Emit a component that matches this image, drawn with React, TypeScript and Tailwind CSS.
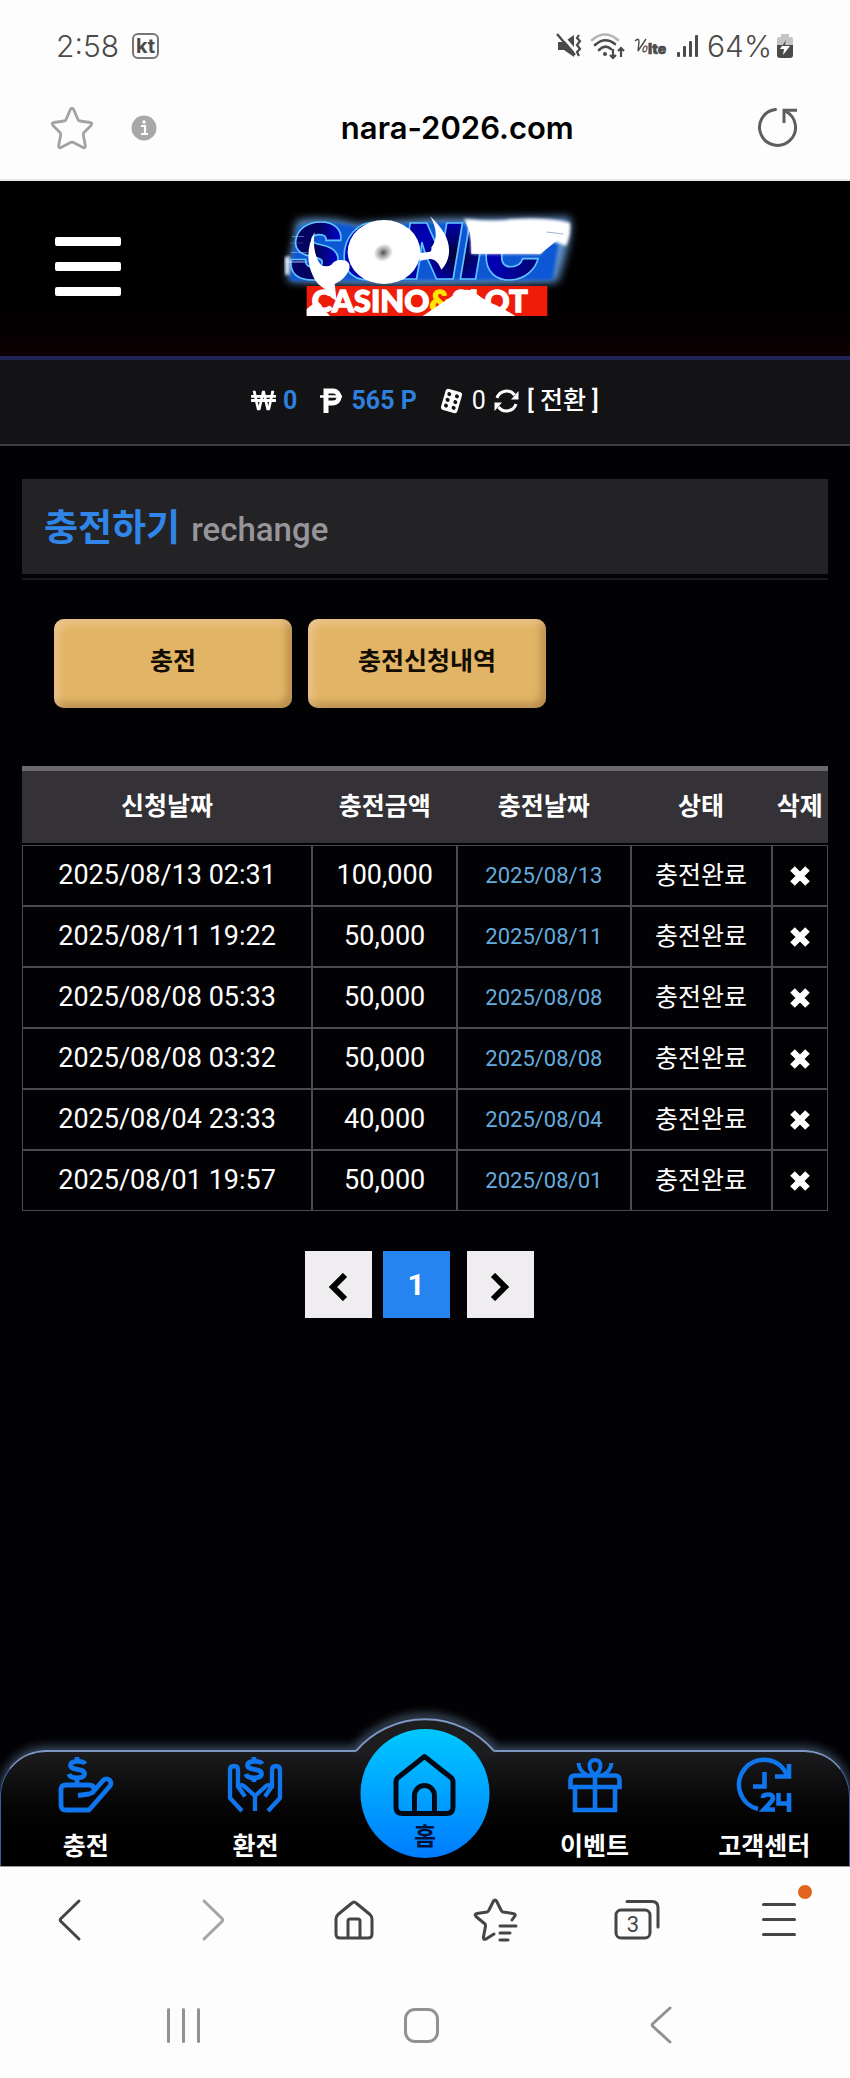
import type { ReactNode } from "react";
import { FaWonSign } from "react-icons/fa";

const rows = [
  { requested: "2025/08/13 02:31", amount: "100,000", charged: "2025/08/13" },
  { requested: "2025/08/11 19:22", amount: "50,000", charged: "2025/08/11" },
  { requested: "2025/08/08 05:33", amount: "50,000", charged: "2025/08/08" },
  { requested: "2025/08/08 03:32", amount: "50,000", charged: "2025/08/08" },
  { requested: "2025/08/04 23:33", amount: "40,000", charged: "2025/08/04" },
  { requested: "2025/08/01 19:57", amount: "50,000", charged: "2025/08/01" },
];

function StatusBar() {
  return (
    <div className="flex h-[92px] items-center justify-between px-[56px] font-[Inter,sans-serif] text-[30px] font-light text-[#4a4a4a]">
      <div className="flex items-center gap-[13px]">
        <span>2:58</span>
        <span className="flex h-[26px] w-[27px] items-center justify-center rounded-[6px] border-2 border-[#777] text-[20px] leading-none font-bold">kt</span>
      </div>
      <div className="flex items-center gap-[8px]">
        <svg className="h-[26px] w-[26px]" viewBox="0 0 26 26" fill="none">
          <path d="M2 9h6l10-7v22l-10-7H2z" fill="#4a4a4a" />
          <path d="M3 -1l19 22" stroke="#fdfdfd" strokeWidth="3" />
          <path d="M1 1l18 21" stroke="#4a4a4a" strokeWidth="2.4" />
          <path d="M23 2l-2 3 3 3-3 4 3 4-3 3 2 4" stroke="#4a4a4a" strokeWidth="2.2" />
        </svg>
        <svg className="h-[28px] w-[36px]" viewBox="0 0 36 28" fill="none" strokeWidth="2.6" strokeLinecap="round">
          <path d="M2 8Q15-3 28 8" stroke="#b5b5b5" />
          <path d="M5 13Q15 4 25 12M9 18Q15 12 21 17" stroke="#4a4a4a" />
          <circle cx="15" cy="22" r="2" fill="#4a4a4a" />
          <path d="M23 17v9m-3-3l3 3 3-3M31 25v-9m-3 3l3-3 3 3" stroke="#4a4a4a" strokeWidth="2.2" strokeLinecap="butt" />
        </svg>
        <svg className="h-[26px] w-[34px]" viewBox="0 0 34 26" fill="none" stroke="#4a4a4a">
          <path d="M1 8Q5 4 5 9L4 18Q8 12 12 6" strokeWidth="1.4" />
          <ellipse cx="11" cy="16" rx="1.800" ry="3" strokeWidth="1.2" transform="rotate(20 11 16)" />
          <text x="14" y="21" fontSize="14" fontWeight="900" fontFamily="Inter" fill="#4a4a4a" strokeWidth="0.500">lte</text>
        </svg>
        <svg className="h-[24px] w-[23px]" viewBox="0 0 23 24" fill="#4a4a4a">
          <rect x="1" y="18" width="3" height="5" rx="1" />
          <rect x="7" y="12" width="3" height="11" rx="1" />
          <rect x="13" y="7" width="3" height="16" rx="1" />
          <rect x="19" y="1" width="3" height="22" rx="1" />
        </svg>
        <span>64%</span>
        <svg className="-ml-1 h-[26px] w-[18px]" viewBox="0 0 18 26">
          <path d="M5 1h8v3h2q2 0 2 2v8H1V6q0-2 2-2h2z" fill="#c4c4c4" />
          <path d="M1 12h16v10q0 3-3 3H4q-3 0-3-3z" fill="#4a4a4a" />
          <path d="M10 7l-6 9h4l-1 6 7-9h-5z" fill="#fff" />
          <path d="M10 7l-4 6h3z" fill="#4a4a4a" />
        </svg>
      </div>
    </div>
  );
}

function AddressBar() {
  return (
    <div className="grid h-[89px] grid-cols-[9fr_auto_7fr] items-center border-b-2 border-[#e6e6e6] px-[50px] pb-[16px]">
      <div className="flex items-center gap-[37px]">
        <button aria-label="즐겨찾기">
          <svg className="block h-[44px] w-[44px]" viewBox="0 0 44 44" fill="none" stroke="#a3a3a3" strokeWidth="2.8" strokeLinejoin="round">
            <path d="M20.400 3.500Q22 1 23.600 3.500L28 13.500Q28.500 14.800 30 15L40 16.500Q43 17 41 19.500L34 26.500Q33 27.500 33.300 29L35.300 39.500Q35.500 42.500 33 41.500L23.500 36.500Q22 35.700 20.500 36.500L11 41.500Q8.500 42.500 8.700 39.500L10.700 29Q11 27.500 10 26.500L3 19.500Q1 17 4 16.500L14 15Q15.500 14.800 16 13.500Z" />
          </svg>
        </button>
        <button aria-label="사이트 정보">
          <svg className="block h-[26px] w-[26px]" viewBox="0 0 26 26">
            <circle cx="13" cy="13" r="12.500" fill="#a8a8a8" />
            <path d="M10 11h4v8M10 19h7" stroke="#fff" strokeWidth="2.200" fill="none" />
            <circle cx="13" cy="7" r="1.700" fill="#fff" />
          </svg>
        </button>
      </div>
      <span className="font-[Inter,sans-serif] text-[31px] leading-none font-semibold text-black">nara-2026.com</span>
      <button aria-label="새로고침" className="justify-self-end">
        <svg className="block h-[44px] w-[44px]" viewBox="0 0 44 44" fill="none" stroke="#5e5e5e" strokeWidth="3">
          <path d="M19.500 3.500A18 18 0 1 0 30 5.500" strokeLinecap="round" />
          <path d="M28 17V4.300H41" />
        </svg>
      </button>
    </div>
  );
}

function Logo() {
  return (
    <svg className="block h-[110px] w-[300px] overflow-visible" viewBox="15 60 900 330" role="img" aria-label="SONIC CASINO&SLOT">
      <defs>
        <radialGradient id="letter" gradientUnits="userSpaceOnUse" cx="560" cy="190" r="420">
          <stop offset="0" stopColor="#010130" />
          <stop offset="0.250" stopColor="#0000b8" />
          <stop offset="0.550" stopColor="#02027a" />
          <stop offset="0.850" stopColor="#0202c8" />
          <stop offset="1" stopColor="#020260" />
        </radialGradient>
        <radialGradient id="hole">
          <stop offset="0" stopColor="#4a4a55" />
          <stop offset="0.350" stopColor="#999" />
          <stop offset="1" stopColor="#fff" />
        </radialGradient>
        <filter id="blurWide" x="-20%" y="-30%" width="140%" height="160%"><feGaussianBlur stdDeviation="12" /></filter>
        <filter id="blurSoft" x="-10%" y="-10%" width="120%" height="120%"><feGaussianBlur stdDeviation="5" /></filter>
        <filter id="blurFine" x="-10%" y="-10%" width="120%" height="120%"><feGaussianBlur stdDeviation="2" /></filter>
      </defs>
      <path d="M80 86Q160 70 260 96L480 80L900 76Q910 130 862 270Q400 290 56 268Q46 220 66 180Z" fill="#6fa6e6" filter="url(#blurWide)" opacity="0.900" />
      <path d="M85 105Q160 78 260 105L480 92L600 92L870 130L848 264L60 266L66 200Z" fill="#0757d4" filter="url(#blurSoft)" />
      <text x="58" y="262" fontFamily="Inter" fontWeight="900" fontStyle="italic" fontSize="232" stroke="#5ec4ff" strokeWidth="5" fill="url(#letter)">SONIC</text>
      <path d="M52 206h60v7H52zM62 180h50v3H62zM66 132h36v3H66zM60 152h40v2H60z" fill="#9cc9ff" opacity="0.500" />
      <path d="M44 196L60 192L58 248L46 248Z" fill="#dfeaff" filter="url(#blurSoft)" />
      <ellipse cx="342" cy="180" rx="109" ry="96" fill="#fff" filter="url(#blurFine)" />
      <ellipse cx="340" cy="182" rx="30" ry="26" fill="url(#hole)" transform="rotate(-30 340 182)" />
      <path d="M480 72C520 110 540 145 537 182C535 205 525 222 514 233C506 212 494 200 478 201L450 206L444 184L476 180Q486 180 484 166C504 140 500 105 480 72Z" fill="#fff" />
      <path d="M604 185Q606 120 582 80Q680 90 720 82Q820 74 900 92Q904 128 888 162L862 152Q842 146 828 158L812 186Z" fill="#fff" filter="url(#blurSoft)" />
      <path d="M604 185Q606 120 588 92L860 96L880 130L812 185Z" fill="#fff" filter="url(#blurFine)" />
      <path d="M830 120l50 6" stroke="#9fb4d4" strokeWidth="3" />
      <rect x="110" y="282" width="722" height="90" fill="#ee1c08" />
      <text x="125" y="361" fontFamily="Lato" fontWeight="900" fontSize="93" fill="#fff" stroke="#fff" strokeWidth="4">
        CASINO<tspan fill="#ffe500" stroke="#ffe500">&amp;</tspan>SLOT
      </text>
      <path d="M134 120C112 160 108 205 128 250C145 290 175 290 176 304Q172 312 200 326L194 276Q226 262 237 234Q244 210 222 205Q196 200 184 218Q170 228 152 218C134 195 128 155 134 120Z" fill="#fff" />
      <path d="M110 372V352Q130 332 144 330Q160 340 156 352Q172 362 180 372ZM458 372L550 310Q590 282 612 300Q650 330 676 338Q712 356 736 372Z" fill="#fff" />
    </svg>
  );
}

function SiteHeader() {
  return (
    <header className="grid h-[179px] grid-cols-[1fr_auto_1fr] items-center border-b-4 border-[#1f2656] bg-linear-to-b from-black from-50% to-[#0e0003] px-[55px] pb-[4px]">
      <button aria-label="메뉴" className="flex w-[66px] flex-col gap-[16px]">
        <span className="h-[9px] rounded-[2px] bg-white" />
        <span className="h-[9px] rounded-[2px] bg-white" />
        <span className="h-[9px] rounded-[2px] bg-white" />
      </button>
      <a href="#"><Logo /></a>
    </header>
  );
}

function BalanceBar() {
  return (
    <div className="flex h-[86px] items-center justify-center border-b-2 border-[#3e3c40] bg-[#131215] pb-[3px] text-[25px] leading-none text-white">
      <FaWonSign className="h-[23px] w-[25px]" />
      <span className="ml-[7px] font-bold text-[#2f80dc]">0</span>
      <svg className="ml-[23px] h-[26px] w-[22px]" viewBox="0 0 22 26" fill="none" stroke="#fff">
        <path d="M6 25V3h7a5.500 5.500 0 0 1 0 12H6" strokeWidth="5" />
        <path d="M0 8.500h22" strokeWidth="2.500" />
      </svg>
      <span className="ml-[9px] font-bold text-[#2f80dc]">565 P</span>
      <svg className="ml-[22px] h-[26px] w-[25px]" viewBox="0 0 25 26">
        <g transform="rotate(16 12.500 13)">
          <rect x="4" y="2" width="17" height="22" rx="3" fill="#fff" />
          <g fill="#131215">
            <circle cx="8.500" cy="7" r="2" /><circle cx="16.500" cy="7" r="2" />
            <circle cx="8.500" cy="13" r="2" /><circle cx="16.500" cy="13" r="2" />
            <circle cx="8.500" cy="19" r="2" /><circle cx="16.500" cy="19" r="2" />
          </g>
        </g>
      </svg>
      <span className="ml-[8px]">0</span>
      <svg className="ml-[8px] h-[26px] w-[25px]" viewBox="0 0 25 26" fill="none" stroke="#fff" strokeWidth="3">
        <path d="M3 10A10 10 0 0 1 20.500 7M22 16A10 10 0 0 1 4.500 19" />
        <path d="M24.500 3v8.500H17zM.5 23v-8.500H8z" fill="#fff" stroke="none" />
      </svg>
      <button className="ml-[8px] font-medium">[ 전환 ]</button>
    </div>
  );
}

function HistoryTable() {
  return (
    <table className="mt-[58px] w-full table-fixed border-separate border-spacing-0 text-center">
      <colgroup>
        <col className="w-[36%]" />
        <col className="w-[18%]" />
        <col className="w-[21.5%]" />
        <col className="w-[17.5%]" />
        <col className="w-[7%]" />
      </colgroup>
      <thead>
        <tr className="h-[79px] text-[25px] font-bold">
          {["신청날짜", "충전금액", "충전날짜", "상태", "삭제"].map((label) => (
            <th key={label} className="border-t-[5px] border-b-2 border-t-[#6b696c] border-b-black bg-[#343236] p-0 whitespace-nowrap">{label}</th>
          ))}
        </tr>
      </thead>
      <tbody>
        {rows.map((row) => (
          <tr key={row.requested} className="h-[61px] text-[27px] leading-none [&>td]:border [&>td]:border-[#4c4a4e] [&>td]:p-0">
            <td>{row.requested}</td>
            <td>{row.amount}</td>
            <td className="text-[22px] text-[#64acdf]">{row.charged}</td>
            <td className="text-[25px]">충전완료</td>
            <td>
              <button aria-label="삭제" className="block w-full">
                <svg className="mx-auto block h-[20px] w-[20px]" viewBox="0 0 20 20" stroke="#fff" strokeWidth="6.500">
                  <path d="M2.500 2.500l15 15M17.500 2.500l-15 15" />
                </svg>
              </button>
            </td>
          </tr>
        ))}
      </tbody>
    </table>
  );
}

function Pager() {
  return (
    <nav aria-label="페이지" className="mt-[40px] flex justify-center pr-[12px]">
      <button aria-label="이전" className="flex size-[67px] items-center justify-center bg-[#efedf0]">
        <svg className="mt-[4px] h-[28px] w-[20px]" viewBox="0 0 20 28" fill="none" stroke="#000" strokeWidth="6"><path d="M17 2L5 14l12 12" /></svg>
      </button>
      <a href="#" aria-current="page" className="ml-[11px] flex size-[67px] items-center justify-center bg-[#2684f0] text-[30px] font-bold">1</a>
      <button aria-label="다음" className="ml-[17px] flex size-[67px] items-center justify-center bg-[#efedf0]">
        <svg className="mt-[4px] h-[28px] w-[20px]" viewBox="0 0 20 28" fill="none" stroke="#000" strokeWidth="6"><path d="M3 2l12 12L3 26" /></svg>
      </button>
    </nav>
  );
}

const dollar = "M27 7C25.500 3.500 13 3 12.500 8C12 14 27 10.500 26.500 17C26 22.500 12.500 22 11 17";

function DepositIcon() {
  return (
    <svg className="h-[56px] w-[56px]" viewBox="0 0 56 56" fill="none" stroke="#0f76ee" strokeWidth="4.800" strokeLinejoin="round">
      <path d={dollar} />
      <path d="M19 0v4M19 21v6" />
      <path d="M20 38.500L31 37Q36 36 36 32Q36 28 30 28H8Q3 28 3 33V48Q3 53 8 53H31L52 29Q54 25 51.500 23Q48 20.500 45 23.500L35 35" />
    </svg>
  );
}

function WithdrawIcon() {
  return (
    <svg className="h-[56px] w-[56px]" viewBox="0 0 56 56" fill="none" stroke="#0f76ee" strokeWidth="4.300" strokeLinejoin="round">
      <g transform="translate(8 0)" strokeWidth="4.800"><path d={dollar} /><path d="M19 0v4M19 21v4" /></g>
      <path d="M28 54V39L17 29Q13.500 27 11.500 30L18 39.500M28 39l11-10Q42.500 27 44.500 30L38 39.500" />
      <path d="M15 54L3 41V13Q3 9 7 9T11 13V31M41 54L53 41V13Q53 9 49 9T45 13V31" />
    </svg>
  );
}

function GiftIcon() {
  return (
    <svg className="h-[56px] w-[56px]" viewBox="0 0 56 56" fill="none" stroke="#0f76ee" strokeWidth="4.600">
      <path d="M3.500 30V23Q3.500 18.500 8 18.500H48Q52.500 18.500 52.500 23V30ZM8 30V53H48V30M28 18V53" />
      <path d="M28 18C21 13 20.500 3 28 3S35 13 28 18ZM20 18Q12 14 11.500 6M36 18Q44 14 44.500 6" strokeWidth="4" />
    </svg>
  );
}

function SupportIcon() {
  return (
    <svg className="h-[56px] w-[56px]" viewBox="0 0 56 56" fill="none" stroke="#0f76ee" strokeWidth="4.600">
      <path d="M22 52A25 25 0 1 1 51 18" />
      <path d="M53 7V19.500H39" />
      <path d="M28.500 15V29.500H17" />
      <path d="M27 41Q27 37.500 32 37.500T37 41Q37 43 34 46L28 52.500H39M42.500 36V46.500H54M53 36V55" />
    </svg>
  );
}

function NavItem({ label, children }: { label: string; children: ReactNode }) {
  return (
    <a href="#" className="flex flex-col items-center pt-[5px] text-[25px] leading-none font-bold text-white">
      {children}
      <span className="mt-[21px]">{label}</span>
    </a>
  );
}

function SiteNav() {
  return (
    <nav aria-label="주 메뉴" className="relative grid h-[116px] grid-cols-5 rounded-t-[46px] border-x border-t-2 border-[#3a5f9c] border-t-[#7d96c4] bg-linear-to-b from-[#1c1c1e] to-black shadow-[0_-3px_11px_0px_#3f5368]">
      <svg className="absolute -top-[36px] left-1/2 h-[40px] w-[140px] -translate-x-1/2 overflow-visible" viewBox="0 0 140 40" fill="none">
        <defs>
          <filter id="glow" x="-20%" y="-60%" width="140%" height="180%"><feGaussianBlur stdDeviation="4" /></filter>
        </defs>
        <path d="M2 32A90 90 0 0 1 138 32" stroke="#4a5f75" strokeWidth="6" filter="url(#glow)" />
        <path d="M1 35A91 91 0 0 1 139 35V40H1Z" fill="#1d1d1f" />
        <path d="M1 35A91 91 0 0 1 139 35" stroke="#7d96c4" strokeWidth="2" />
      </svg>
      <NavItem label="충전"><DepositIcon /></NavItem>
      <NavItem label="환전"><WithdrawIcon /></NavItem>
      <div className="relative">
        <a href="#" className="absolute -top-[23px] left-1/2 flex size-[129px] -translate-x-1/2 flex-col items-center rounded-full bg-linear-to-b from-[#00c8ff] to-[#007bff] pt-[24px] text-[24px] leading-none font-bold text-[#02103c]">
          <svg className="h-[64px] w-[66px]" viewBox="0 0 66 64" fill="none" stroke="#020814" strokeWidth="5" strokeLinejoin="round">
            <path d="M33 3.500L60 25Q61.500 26.500 61.500 29V54Q61.500 60.500 55 60.500H11Q4.500 60.500 4.500 54V29Q4.500 26.500 6 25Z" />
            <path d="M23 60V42.500A10 10 0 0 1 43 42.500V60" />
          </svg>
          <span className="mt-[8px]">홈</span>
        </a>
      </div>
      <NavItem label="이벤트"><GiftIcon /></NavItem>
      <NavItem label="고객센터"><SupportIcon /></NavItem>
    </nav>
  );
}

function BrowserToolbar() {
  const cell = "flex items-center justify-center";
  return (
    <div className="relative grid h-[106px] grid-cols-6 border-t border-[#999] bg-[#fdfdfd] text-[#454545]">
      <button aria-label="뒤로" className={cell}>
        <svg className="mr-[4px] h-[44px] w-[26px]" viewBox="0 0 26 44" fill="none" stroke="currentColor" strokeWidth="3" strokeLinecap="round" strokeLinejoin="round"><path d="M23 3L5 20.500Q3.500 22 5 23.500L23 41" /></svg>
      </button>
      <button aria-label="앞으로" className={cell}>
        <svg className="ml-[4px] h-[44px] w-[26px]" viewBox="0 0 26 44" fill="none" stroke="#a5a5a5" strokeWidth="3" strokeLinecap="round" strokeLinejoin="round"><path d="M3 3L21 20.500Q22.500 22 21 23.500L3 41" /></svg>
      </button>
      <button aria-label="홈 화면" className={cell}>
        <svg className="h-[42px] w-[42px]" viewBox="0 0 42 42" fill="none" stroke="currentColor" strokeWidth="3" strokeLinejoin="round">
          <path d="M19 4Q21 2 23 4L37 15.500Q39 17.500 39 20V35Q39 39 35 39H7Q3 39 3 35V20Q3 17.500 5 15.500Z" />
          <path d="M15 39V22Q15 20 17 20H25Q27 20 27 22V39" />
        </svg>
      </button>
      <button aria-label="북마크" className={cell}>
        <svg className="h-[44px] w-[46px]" viewBox="0 0 46 44" fill="none" stroke="currentColor" strokeWidth="3" strokeLinecap="round" strokeLinejoin="round">
          <path d="M21 36L13 41Q10 42 10.500 39L12.500 28Q12.500 27 12 26L3 18.500Q1 16 4 15.500L14 14Q15.500 13.500 16 12L20.500 3Q22 1 23.500 3L28 12Q28.500 13.500 30 14L40 15.500Q43.500 16 41.500 18.500L39 22" />
          <path d="M27 28H43M27 35H37M27 42H35" />
        </svg>
      </button>
      <button aria-label="탭 3개" className={cell}>
        <svg className="h-[42px] w-[46px]" viewBox="0 0 46 42" fill="none" stroke="currentColor" strokeWidth="3" strokeLinecap="round">
          <rect x="2" y="11" width="34" height="28" rx="5" />
          <path d="M13 2.500H38Q44 2.500 44 8.500V28" />
          <text x="19" y="33" textAnchor="middle" fontSize="22" fontFamily="Roboto" fill="currentColor" stroke="none">3</text>
        </svg>
      </button>
      <button aria-label="더보기" className={cell}>
        <span className="relative flex w-[34px] flex-col gap-[12px]">
          <span className="h-[3px] rounded-full bg-current" />
          <span className="h-[3px] rounded-full bg-current" />
          <span className="h-[3px] rounded-full bg-current" />
          <span className="absolute -top-[18px] -right-[16px] size-[14px] rounded-full bg-[#e2641c]" />
        </span>
      </button>
    </div>
  );
}

function SystemNav() {
  return (
    <div className="grid h-[106px] grid-cols-3 items-center justify-items-center pr-[70px] pl-[64px] text-[#929292]">
      <button aria-label="최근 앱" className="flex gap-[12px]">
        <span className="h-[35px] w-[3px] rounded-full bg-current" />
        <span className="h-[35px] w-[3px] rounded-full bg-current" />
        <span className="h-[35px] w-[3px] rounded-full bg-current" />
      </button>
      <button aria-label="시스템 홈" className="h-[35px] w-[35px] rounded-[11px] border-3 border-current" />
      <button aria-label="시스템 뒤로">
        <svg className="block h-[38px] w-[24px]" viewBox="0 0 24 38" fill="none" stroke="currentColor" strokeWidth="3" strokeLinecap="round" strokeLinejoin="round"><path d="M21 2L4 17.500Q2.500 19 4 20.500L21 36" /></svg>
      </button>
    </div>
  );
}

export default function App() {
  const action =
    "h-[89px] w-[238px] rounded-[10px] bg-[#e2b566] pb-[4px] text-[25px] font-bold text-[#120c04] shadow-[inset_4px_4px_8px_rgba(255,225,200,0.45),inset_-4px_-4px_8px_rgba(120,80,30,0.45)]";
  return (
    <div className="flex min-h-screen flex-col bg-[#fdfdfd] font-[Roboto,'Noto_Sans_CJK_KR',sans-serif]">
      <StatusBar />
      <AddressBar />
      <SiteHeader />
      <div className="flex grow flex-col bg-[#020104] text-white">
        <BalanceBar />
        <main className="grow px-[22px] pt-[33px] pb-[60px]">
          <div className="border-b-2 border-[#1a191c] pb-[4px]">
            <h1 className="flex h-[95px] items-baseline gap-[11px] bg-[#232225] pl-[22px] text-[37px] leading-[100px] font-bold text-[#2f86e8]">
              충전하기
              <small className="text-[33px] font-medium text-[#979599]">rechange</small>
            </h1>
          </div>
          <div className="mt-[39px] flex gap-[16px] pl-[32px]">
            <button className={action}>충전</button>
            <button className={action}>충전신청내역</button>
          </div>
          <HistoryTable />
          <Pager />
        </main>
        <SiteNav />
      </div>
      <BrowserToolbar />
      <SystemNav />
    </div>
  );
}
